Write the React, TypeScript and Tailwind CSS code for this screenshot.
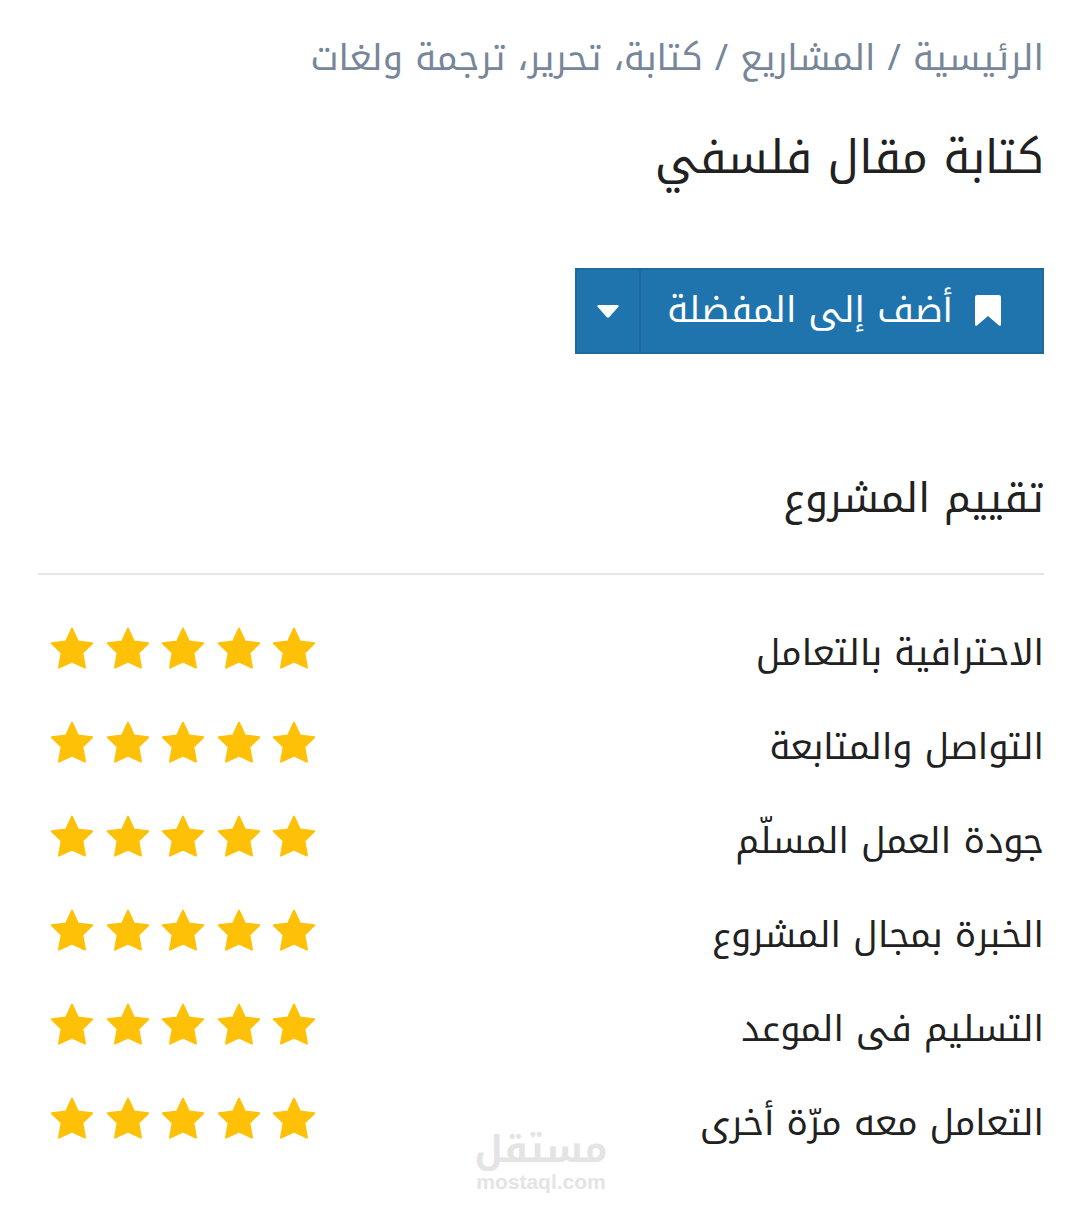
import React from "react";

const crumbs = ["الرئيسية", "المشاريع", "كتابة، تحرير، ترجمة ولغات"];

const ratings = [
  { label: "الاحترافية بالتعامل", stars: 5 },
  { label: "التواصل والمتابعة", stars: 5 },
  { label: "جودة العمل المسلّم", stars: 5 },
  { label: "الخبرة بمجال المشروع", stars: 5 },
  { label: "التسليم فى الموعد", stars: 5 },
  { label: "التعامل معه مرّة أخرى", stars: 5 },
];

function Star() {
  return (
    <svg viewBox="0 0 44 44" className="size-11" aria-hidden="true">
      <path
        d="M22 2.6 L28 15.6 L42.2 17.2 L32.4 26.8 L35 41.6 L22 35.6 L9 41.6 L11.6 26.8 L1.8 17.2 L16 15.6 Z"
        fill="#ffc107"
        stroke="#ffc107"
        strokeWidth="2"
        strokeLinejoin="round"
      />
    </svg>
  );
}

function Breadcrumb() {
  return (
    <nav aria-label="مسار التنقل" className="text-[36px] leading-[56px] text-[#778699]">
      <ol className="flex flex-wrap">
        {crumbs.map((crumb, i) => (
          <li key={crumb} className="flex">
            {i > 0 && <span className="px-3">/</span>}
            <a href="#">{crumb}</a>
          </li>
        ))}
      </ol>
    </nav>
  );
}

function FavouriteButton() {
  return (
    <div className="flex w-fit border-2 border-[#1d6a9f] bg-[#1f74ae] text-white">
      <button type="button" className="flex h-[82px] items-center gap-[22px] pr-[41px] pb-0.5 pl-[26px] text-[36px]">
        <svg viewBox="0 0 26 31" className="h-[31px] w-[26px]" aria-hidden="true">
          <path d="M2.5 0H23.5Q26 0 26 2.5V29.5Q26 31.5 24 30.4L13 21L2 30.4Q0 31.5 0 29.5V2.5Q0 0 2.5 0Z" fill="currentColor" />
        </svg>
        <span>أضف إلى المفضلة</span>
      </button>
      <button
        type="button"
        aria-label="خيارات إضافية"
        className="flex w-16 items-center justify-center border-r-2 border-[#1d6a9f]"
      >
        <svg viewBox="0 0 22 13" className="h-[13px] w-[22px]" aria-hidden="true">
          <path d="M1.4 0H20.6Q22.4 .4 21.2 2L12.4 12Q11 13.4 9.6 12L.8 2Q-.4 .4 1.4 0Z" fill="currentColor" />
        </svg>
      </button>
    </div>
  );
}

export default function App() {
  return (
    <main
      dir="rtl"
      className="min-h-screen bg-white pt-[30px] pr-9 pl-[38px] font-['Noto_Kufi_Arabic','Noto_Sans_Arabic','DejaVu_Sans',sans-serif] text-[#212121]"
    >
      <Breadcrumb />
      <h1 className="mt-8 mb-[70px] text-[46px] leading-[80px]">كتابة مقال فلسفي</h1>
      <FavouriteButton />

      <section>
        <h2 className="mt-[108px] border-b-2 border-[#e6e6e6] pb-[39px] text-[41px] leading-[72px]">تقييم المشروع</h2>
        <dl className="mt-[31px]">
          {ratings.map(({ label, stars }) => (
            <div key={label} className="flex h-[94px] items-center justify-between">
              <dt className="text-[36px] leading-[56px]">{label}</dt>
              <dd className="flex w-[278px] justify-between pb-2.5 pl-3" aria-label={`${stars} من 5`}>
                {Array.from({ length: stars }, (_, i) => (
                  <Star key={i} />
                ))}
              </dd>
            </div>
          ))}
        </dl>
      </section>

      <footer className="-mt-10 flex flex-col items-center text-[#e4e4e4]">
        <span className="text-[37px] leading-10 font-bold">مستقل</span>
        <span dir="ltr" className="font-['Liberation_Sans',sans-serif] text-[21px] leading-6 font-bold">
          mostaql.com
        </span>
      </footer>
    </main>
  );
}
